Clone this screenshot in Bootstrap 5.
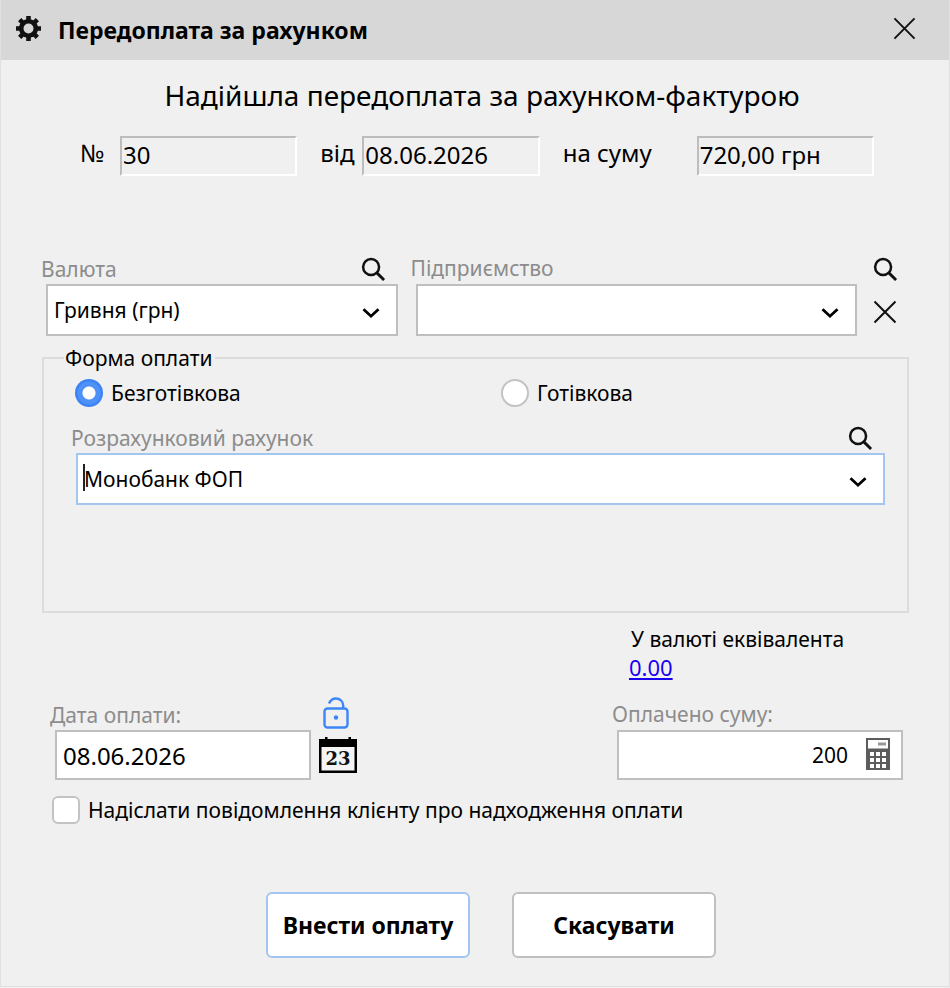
<!DOCTYPE html>
<html lang="uk">
<head>
<meta charset="utf-8">
<meta name="viewport" content="width=device-width, initial-scale=1">
<title>Передоплата за рахунком</title>
<link rel="stylesheet" href="https://cdn.jsdelivr.net/npm/bootstrap@5.3.0/dist/css/bootstrap.min.css">
<style>
body{font-family:"Noto Sans","Open Sans",sans-serif;font-size:21px;line-height:28px;color:#000;background:#f0f0f0}
.dialog-window{border:1px solid #e0e0e0;border-top:0}
.title-bar{height:60px;background:#d7d7d7;padding:0 33px 0 14px}
.title-text{font-size:23px;line-height:28px;font-weight:700;margin-left:16px}
.icon-btn{padding:0;border:0;background:none;display:flex;color:#111}
.heading-line{font-size:28px;line-height:38px;padding-left:14px}
.invoice-row{font-size:24px;padding:0 75px 0 79px;margin-top:22px;line-height:34px}
.invoice-row input{flex:1 1 0;min-width:0;height:40px;padding:0 1px 3px;font-size:24px;line-height:34px;color:#000;background:#f0f0f0;border:2px solid;border-color:#bdbdbd #fff #fff #bdbdbd;border-radius:0}
.lbl-no{width:40px}
.lbl-from{width:65px;padding-left:23px}
.lbl-sum{width:157px;padding-left:23px}
.caption{color:#8c8c8c}
.party-row{padding:0 51px 0 40px;margin-top:78px}
.cell-currency{flex:357 1 0;min-width:0}
.cell-company{flex:447 1 0;min-width:0;margin-left:13px}
.cell-tools{width:25px;margin-left:16px}
.head-line{height:30px}
.indent{margin-left:5px}
.combo{height:52px;padding:0 60px 0 6px;border:2px solid #bfbfbf;border-radius:0;color:#000;font-size:21px;line-height:28px;background:#fff url("data:image/svg+xml,%3Csvg xmlns='http://www.w3.org/2000/svg' viewBox='0 0 18 12'%3E%3Cpath d='M1.5 2.2 9 9.2l7.500-7' fill='none' stroke='%23000' stroke-width='2.8'/%3E%3C/svg%3E") no-repeat right 16px top 21px/18px 12px}
.combo-active{border-color:#a3c6ee}
.text-caret{position:absolute;left:7px;top:11px;width:2px;height:27px;background:#222}
.pay-form{margin:10px 40px 0 41px;border:2px solid #dcdcdc;padding:0 22px 0 27px;height:267px}
.pay-form legend{float:none;width:auto;font-size:21px;line-height:24px;margin:0 0 9px -7px;padding:0 3px 0 1px}
.choice{width:28px;height:28px;margin:0;border:2px solid #c3c3c3;background-color:#fff;float:none;flex:none}
.choice:checked[type=radio]{border:0;background:radial-gradient(circle,#fff 0 6px,#4f92f7 7px 11px,#3c83f6 12px)}
.choice[type=checkbox]{border-radius:6px}
.choice-bank{flex:424 1 0}
.choice-cash{flex:382 1 0}
.equiv{margin-left:auto;width:318px;margin-top:12px}
.equiv-link{color:#1a00f0;font-size:22px;margin-left:-2px}
.amounts{margin-top:18px;padding:0 46px 0 49px}
.cell-date{width:307px}
.cell-amount{width:291px}
.entry{height:50px;border:2px solid #bfbfbf;border-radius:0;color:#000;padding:0 6px}
.entry-date{font-size:24px;flex:1 1 0;min-width:0}
.entry-sum{font-size:21px;padding-right:53px;text-align:right}
.calc-btn{position:absolute;right:13px;top:8px}
.notify{margin-top:16px;padding-left:51px}
.actions{margin-top:68px;padding:0 30px 28px 62px;gap:42px}
.action-btn{width:204px;height:66px;padding:0;font-size:23px;font-weight:700;background:#fff;border:2px solid #c0c0c0;border-radius:6px;color:#000}
.action-main{border-color:#a3c6f0}
</style>
<script src="https://cdn.jsdelivr.net/npm/bootstrap@5.3.0/dist/js/bootstrap.bundle.min.js"></script>
</head>
<body>
<svg class="d-none" aria-hidden="true">
  <symbol id="i-search" viewBox="0 0 26 26"><circle cx="10.500" cy="10.500" r="8.300" fill="none" stroke="#111" stroke-width="2.600"/><path d="M16.500 16.500 24 24" stroke="#111" stroke-width="3"/></symbol>
  <symbol id="i-cross" viewBox="0 0 24 24"><path d="M1.500 1.500 22.500 22.500M22.500 1.500 1.500 22.500" stroke="#111" stroke-width="2"/></symbol>
</svg>
<main class="dialog-window">
  <header class="title-bar d-flex align-items-center">
    <svg width="27" height="27" viewBox="-13.500 -13.500 27 27" aria-hidden="true" class="mb-1">
      <circle r="7.300" fill="none" stroke="#111" stroke-width="4.600"/>
      <g stroke="#111" stroke-width="4.600"><path d="M0-12.500V-8M0 12.500V8M-12.500 0H-8M12.500 0H8"/><path d="M0-12.500V-8M0 12.500V8M-12.500 0H-8M12.500 0H8" transform="rotate(45)"/></g>
    </svg>
    <h1 class="title-text mb-0">Передоплата за рахунком</h1>
    <button type="button" class="icon-btn ms-auto mb-1" aria-label="Закрити"><svg width="23" height="23"><use href="#i-cross"/></svg></button>
  </header>
  <form>
    <h2 class="heading-line text-center fw-normal mb-0 mt-3">Надійшла передоплата за рахунком-фактурою</h2>
    <div class="invoice-row d-flex">
      <label class="lbl-no" for="inv-no">№</label><input id="inv-no" type="text" value="30" readonly>
      <label class="lbl-from" for="inv-date">від</label><input id="inv-date" type="text" value="08.06.2026" readonly>
      <label class="lbl-sum" for="inv-sum">на суму</label><input id="inv-sum" type="text" value="720,00 грн" readonly>
    </div>

    <div class="party-row d-flex">
      <div class="cell-currency">
        <div class="head-line d-flex justify-content-between align-items-center">
          <label class="caption" for="currency">Валюта</label>
          <button type="button" class="icon-btn me-2 pe-1" aria-label="Знайти валюту"><svg width="25" height="25"><use href="#i-search"/></svg></button>
        </div>
        <div class="indent"><select id="currency" class="form-select combo"><option>Гривня (грн)</option></select></div>
      </div>
      <div class="cell-company">
        <div class="head-line"><label class="caption" for="company">Підприємство</label></div>
        <div class="indent"><select id="company" class="form-select combo"><option></option></select></div>
      </div>
      <div class="cell-tools">
        <div class="head-line d-flex align-items-center"><button type="button" class="icon-btn" aria-label="Знайти підприємство"><svg width="25" height="25"><use href="#i-search"/></svg></button></div>
        <button type="button" class="icon-btn mt-3" aria-label="Очистити"><svg width="24" height="24"><use href="#i-cross"/></svg></button>
      </div>
    </div>

    <fieldset class="pay-form">
      <legend>Форма оплати</legend>
      <div class="d-flex ms-1">
        <div class="choice-bank d-flex align-items-center gap-2"><input class="form-check-input choice" type="radio" name="pay" id="pay-bank" checked><label for="pay-bank">Безготівкова</label></div>
        <div class="choice-cash d-flex align-items-center gap-2"><input class="form-check-input choice" type="radio" name="pay" id="pay-cash"><label for="pay-cash">Готівкова</label></div>
      </div>
      <div class="head-line d-flex justify-content-between align-items-center mt-3">
        <label class="caption" for="account">Розрахунковий рахунок</label>
        <button type="button" class="icon-btn me-2 pe-1" aria-label="Знайти рахунок"><svg width="25" height="25"><use href="#i-search"/></svg></button>
      </div>
      <div class="indent position-relative"><select id="account" class="form-select combo combo-active"><option>Монобанк ФОП</option></select><span class="text-caret"></span></div>
    </fieldset>

    <div class="equiv">
      <div>У валюті еквівалента</div>
      <a href="#" class="equiv-link d-inline-block">0.00</a>
    </div>

    <div class="amounts d-flex justify-content-between align-items-end">
      <div class="cell-date">
        <div class="head-line d-flex justify-content-between align-items-center">
          <label class="caption" for="pay-date">Дата оплати:</label>
          <button type="button" class="icon-btn me-2 pb-1" aria-label="Розблокувати дату"><svg width="26" height="32" viewBox="0 0 26 32" fill="none" stroke="#3c86f7" stroke-width="2.400"><rect x="1.500" y="11.500" width="23" height="19" rx="3"/><path d="M6 6.500C7.500 3 10 1.500 13 1.500c4 0 7.200 3 7.200 7v3"/><circle cx="13" cy="20.500" r="2.200" fill="#3c86f7" stroke="none"/></svg></button>
        </div>
        <div class="indent d-flex align-items-center">
          <input id="pay-date" type="text" class="form-control entry entry-date" value="08.06.2026">
          <button type="button" class="icon-btn ms-2" aria-label="Календар"><svg width="38" height="36" viewBox="0 0 38 36"><path d="M0 2H6V0H8.500V2H29.500V0H32V2H38V36H0Z" fill="#000"/><path d="M2.500 10H35.500V33.500H2.500Z" fill="#f4f4f4"/><text x="19" y="27.500" text-anchor="middle" font-family="DejaVu Serif, serif" font-weight="700" font-size="18" fill="#111">23</text></svg></button>
        </div>
      </div>
      <div class="cell-amount">
        <div class="head-line"><label class="caption" for="pay-sum">Оплачено суму:</label></div>
        <div class="indent position-relative">
          <input id="pay-sum" type="text" class="form-control entry entry-sum" value="200">
          <button type="button" class="icon-btn calc-btn" aria-label="Калькулятор"><svg width="24" height="32" viewBox="0 0 24 32"><rect width="24" height="32" fill="#5c5c5c"/><path d="M2 2H22V10.500H2Z" fill="#fff"/><path d="M12 4.500H20V7.500H12Z" fill="#999"/><g fill="#fff"><path d="M4 14h4v4H4zM10 14h4v4h-4zM16 14h4v4h-4zM4 20h4v4H4zM10 20h4v4h-4zM16 20h4v4h-4zM4 26h4v4H4zM10 26h4v4h-4zM16 26h4v4h-4z"/></g></svg></button>
        </div>
      </div>
    </div>

    <div class="notify d-flex align-items-center gap-2"><input class="form-check-input choice" type="checkbox" id="notify"><label for="notify">Надіслати повідомлення клієнту про надходження оплати</label></div>

    <div class="actions d-flex justify-content-center">
      <button type="button" class="btn action-btn action-main">Внести оплату</button>
      <button type="button" class="btn action-btn">Скасувати</button>
    </div>
  </form>
</main>
</body>
</html>
